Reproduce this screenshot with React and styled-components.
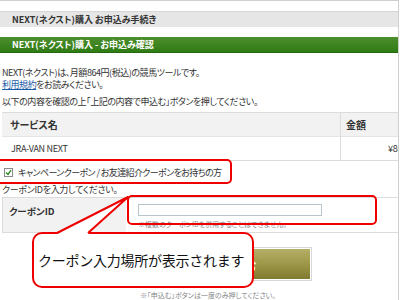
import React from 'react'
import styled, { createGlobalStyle } from 'styled-components'

const Global = createGlobalStyle`
  html, body {
    margin: 0;
    padding: 0;
    background: #fff;
  }
  body {
    width: 400px;
    height: 300px;
    overflow: hidden;
    font-family: "Noto Sans CJK JP", "Noto Sans", sans-serif;
    font-feature-settings: "palt";
    color: #333;
  }
`

const Frame = styled.div`
  position: relative;
  width: 398px;
  height: 299px;
  border-top: 1px solid #cfcfcf;
  border-right: 1px solid #cfcfcf;
  overflow: hidden;
  font-size: 9px;
`

const StepBar = styled.div`
  margin-top: 10px;
  height: 15px;
  line-height: 15px;
  padding-left: 12px;
  background: #e6e6e6;
  border-top: 1px solid #d6d6d6;
  font-weight: bold;
  font-size: 9px;
  color: #333;
`

const TitleBar = styled.div`
  margin-top: 10px;
  height: 15px;
  line-height: 15px;
  padding-left: 12px;
  background: linear-gradient(#4e8f2e, #2f7b14);
  border-bottom: 1px solid #236a0c;
  font-weight: bold;
  font-size: 9px;
  color: #fff;
`

const Intro = styled.div`
  margin-top: 14px;
  padding-left: 2px;
  line-height: 12px;
  letter-spacing: -0.45px;
`

const Line = styled.div`
  margin-top: ${p => p.$gap || 0}px;
  white-space: nowrap;
`

const Link = styled.a`
  color: #1b5aa8;
  text-decoration: underline;
`

const Table = styled.div`
  margin: 4px 0 0 2px;
  display: grid;
  grid-template-columns: 338px 1fr;
  border-top: 1px solid #dcdcdc;
  border-bottom: 1px solid #dcdcdc;
`

const Cell = styled.div`
  height: 23px;
  display: flex;
  align-items: center;
  padding-left: ${p => p.$pad || 6}px;
  background: ${p => (p.$head ? '#f2f2f2' : '#fff')};
  border-left: ${p => (p.$divide ? '1px solid #dcdcdc' : 'none')};
  border-top: ${p => (p.$row ? '1px solid #e4e4e4' : 'none')};
  font-weight: ${p => (p.$head ? 'bold' : 'normal')};
  font-size: ${p => (p.$head ? 10 : 9)}px;
  letter-spacing: ${p => (p.$head ? 0 : -0.3)}px;
  white-space: nowrap;
  overflow: hidden;
`

const CheckRow = styled.label`
  height: 22px;
  display: flex;
  align-items: center;
  gap: 5px;
  padding-left: 4px;
  font-size: 9px;
  letter-spacing: -0.6px;
`

const Box = styled.span`
  width: 7px;
  height: 7px;
  border: 1px solid #8a8a8a;
  background: #fff;
  display: flex;
  align-items: center;
  justify-content: center;
`

const Hint = styled.div`
  padding-left: 2px;
  height: 14px;
  line-height: 14px;
  letter-spacing: -0.3px;
  white-space: nowrap;
`

const CouponTable = styled.div`
  margin-left: 2px;
  height: 34px;
  display: grid;
  grid-template-columns: 123px 1fr;
  border-top: 1px solid #dcdcdc;
  border-bottom: 1px solid #dcdcdc;
  border-left: 1px solid #dcdcdc;
`

const Label = styled.div`
  background: #f2f2f2;
  padding: 6px 0 0 6px;
  font-weight: bold;
  font-size: 9.5px;
`

const Field = styled.div`
  padding: 6px 0 0 12px;
`

const Input = styled.div`
  width: 182px;
  height: 10px;
  border: 1px solid #b7c5cd;
  background: #fff;
`

const Note = styled.div`
  margin-top: ${p => p.$gap || 3}px;
  padding-left: ${p => p.$indent || 0}px;
  font-size: 7px;
  color: #888;
  white-space: nowrap;
`

const ButtonArea = styled.div`
  padding-top: 14px;
  display: flex;
  flex-direction: column;
  align-items: center;
`

const Button = styled.div`
  width: 224px;
  height: 32px;
  border: 1px solid #d8d8d8;
  box-shadow: inset 0 0 0 1px #fff;
  background: linear-gradient(#b7b068, #9d9749 50%, #7e782f);
  color: #fff;
  font-weight: bold;
  font-size: 13px;
  display: flex;
  align-items: center;
  justify-content: center;
`

const RedBox = styled.div`
  position: absolute;
  left: ${p => p.$x}px;
  top: ${p => p.$y}px;
  width: ${p => p.$w}px;
  height: ${p => p.$h}px;
  box-sizing: border-box;
  border: 2px solid #ee0000;
  border-radius: ${p => p.$r || 5}px;
`

const Callout = styled(RedBox)`
  background: #fff;
  display: flex;
  align-items: center;
  padding-left: 4px;
  font-size: 14px;
  letter-spacing: -0.25px;
  color: #111;
  font-feature-settings: normal;
  white-space: nowrap;
`

const Tail = styled.svg`
  position: absolute;
  left: 0;
  top: 0;
`

export default function App() {
  return (
    <>
      <Global />
      <Frame>
        <StepBar>NEXT(ネクスト)購入 お申込み手続き</StepBar>
        <TitleBar>NEXT(ネクスト)購入 - お申込み確認</TitleBar>
        <Intro>
          <Line>NEXT(ネクスト)は、月額864円(税込)の競馬ツールです。</Line>
          <Line><Link>利用規約</Link>をお読みください。</Line>
          <Line $gap={5}>以下の内容を確認の上「上記の内容で申込む」ボタンを押してください。</Line>
        </Intro>
        <Table>
          <Cell $head $pad={8}>サービス名</Cell>
          <Cell $head $divide $pad={5}>金額</Cell>
          <Cell $row $pad={9}>JRA-VAN NEXT</Cell>
          <Cell $row $divide $pad={47}>¥864</Cell>
        </Table>
        <CheckRow>
          <Box>
            <svg width="7" height="7" viewBox="0 0 7 7">
              <path d="M1 3.5 L3 5.5 L6 1.2" fill="none" stroke="#2e8a1e" strokeWidth="1.4" />
            </svg>
          </Box>
          キャンペーンクーポン / お友達紹介クーポンをお持ちの方
        </CheckRow>
        <Hint>クーポンIDを入力してください。</Hint>
        <CouponTable>
          <Label>クーポンID</Label>
          <Field>
            <Input />
            <Note>※複数のクーポンIDを併用することはできません。</Note>
          </Field>
        </CouponTable>
        <ButtonArea>
          <Button>上記の内容で申込む</Button>
          <Note $gap={9} $indent={18}>※「申込む」ボタンは一度のみ押してください。</Note>
        </ButtonArea>

        <RedBox $x={-6} $y={158} $w={238} $h={25} />
        <RedBox $x={127} $y={194} $w={250} $h={30} />
        <Callout $x={32} $y={231} $w={222} $h={56} $r={10}>
          クーポン入力場所が表示されます
        </Callout>
        <Tail width="400" height="300">
          <polygon points="57,233 128,196 88,233" fill="#fff" />
          <polyline points="57,232 128,196 88,232" fill="none" stroke="#ee0000" strokeWidth="2" strokeLinejoin="round" />
        </Tail>
      </Frame>
    </>
  )
}
